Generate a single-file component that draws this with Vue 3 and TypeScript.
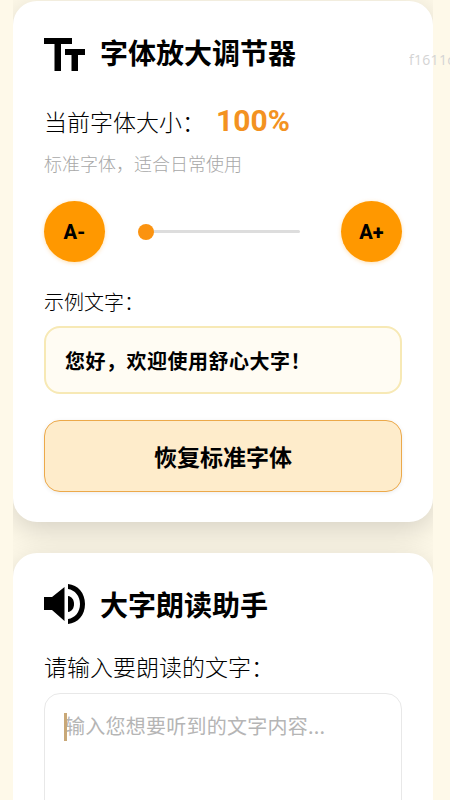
<script setup lang="ts">
const title = '字体放大调节器'
</script>

<template>
  <main class="page">
    <span class="stray">f1611c</span>
    <div class="scroller">
      <section class="card first">
        <header class="head">
          <svg class="icon" viewBox="0 0 41 33" aria-hidden="true">
            <path d="M0 0H28V6H17V33H10.500V6H0Z" />
            <path d="M21 11H41V17H34V33H27.500V17H21Z" />
          </svg>
          <h2>{{ title }}</h2>
        </header>
        <div class="current">
          <span class="label">当前字体大小：</span>
          <strong>100%</strong>
        </div>
        <p class="hint">标准字体，适合日常使用</p>
        <div class="controls">
          <button class="round">A-</button>
          <div class="slider"><span class="thumb"></span></div>
          <button class="round">A+</button>
        </div>
        <p class="sample-label">示例文字：</p>
        <div class="sample">您好，欢迎使用舒心大字！</div>
        <button class="reset">恢复标准字体</button>
      </section>

      <section class="card second">
        <header class="head">
          <svg class="icon speaker" viewBox="0 0 41 40" aria-hidden="true">
            <path d="M0 13H8L20.500 3V37L8 26H0Z" />
            <path d="M24 12C28 12.500 30 16 30 20C30 24 28 27.500 24 28Z" />
            <path d="M24 0C34 1 41 9 41 20C41 31 34 39 24 40V35C31 34 36 28 36 20C36 12 31 6 24 5Z" />
          </svg>
          <h2>大字朗读助手</h2>
        </header>
        <p class="label input-label">请输入要朗读的文字：</p>
        <div class="input-wrap">
          <textarea placeholder="输入您想要听到的文字内容..."></textarea>
          <span class="caret"></span>
        </div>
      </section>
    </div>
  </main>
</template>

<style>
html, body { margin: 0; background: #fef9e9; overflow: hidden; }
</style>

<style scoped>
.page {
  position: relative;
  box-sizing: border-box;
  height: 800px;
  overflow: hidden;
  padding-left: 13px;
  background: #fef9e9;
  color: #000;
  font-family: "Noto Sans CJK SC", sans-serif;
}
.scroller {
  width: 420px;
  height: 800px;
  overflow: hidden;
  padding-top: 1px;
  box-sizing: border-box;
  display: flex;
  flex-direction: column;
  gap: 31px;
}
.stray {
  position: absolute;
  z-index: 1;
  left: 409px;
  top: 51px;
  max-width: 41px;
  overflow: hidden;
  font: 14px/18px "Open Sans", sans-serif;
  letter-spacing: .3px;
  color: #d4d4d4;
  white-space: nowrap;
}
.card {
  box-sizing: border-box;
  flex: none;
  background: #fff;
  border-radius: 24px;
  padding: 31px 31px 30px;
  box-shadow: 0 8px 30px rgba(0, 0, 0, .17);
}
.first { height: 521px; }
.second { height: 400px; }
.head { display: flex; align-items: center; gap: 15px; height: 40px; }
.icon { width: 41px; height: 33px; fill: #000; flex: none; margin-top: 4px; }
.speaker { height: 40px; margin-top: 0; }
h2 { margin: 0; font-size: 28px; line-height: 40px; font-weight: 700; }
.label { font-size: 23px; line-height: 34px; font-weight: 300; color: #000; }
.current { display: flex; align-items: center; margin-top: 29px; height: 40px; }
.current strong {
  margin-left: 11px;
  font: 700 30px/40px Roboto, sans-serif;
  color: #f39221;
}
.hint { margin: 9px 0 0; font-size: 18px; line-height: 26px; font-weight: 300; color: #a8a8a8; }
.controls { display: flex; align-items: center; justify-content: space-between; margin-top: 25px; }
.round {
  width: 61px;
  height: 61px;
  flex: none;
  padding: 0;
  border: 0;
  border-radius: 50%;
  background: #ff9800;
  color: #000;
  font: 800 20px/1 Roboto, sans-serif;
  box-shadow: 0 1px 4px rgba(255, 152, 0, .3);
}
.slider {
  position: relative;
  width: 154px;
  height: 3px;
  border-radius: 2px;
  background: #ddd;
}
.thumb {
  position: absolute;
  left: -8px;
  top: -6.5px;
  width: 16px;
  height: 16px;
  border-radius: 50%;
  background: #fb9310;
}
.sample-label { margin: 23px 0 0; font-size: 20px; line-height: 34px; font-weight: 300; color: #000; }
.sample {
  box-sizing: border-box;
  height: 68px;
  margin-top: 7px;
  padding: 0 19px;
  display: flex;
  align-items: center;
  border: 2px solid #f7e9b5;
  border-radius: 16px;
  background: #fffcf3;
  font-size: 20px;
  font-weight: 700;
  letter-spacing: .5px;
}
.reset {
  display: block;
  box-sizing: border-box;
  width: 100%;
  height: 72px;
  margin-top: 26px;
  border: 1.5px solid #eca94a;
  border-radius: 16px;
  background: #feeccb;
  color: #000;
  font-family: inherit;
  font-size: 23px;
  font-weight: 700;
  box-shadow: 0 1px 4px rgba(0, 0, 0, .08);
}
.input-label { margin: 25px 0 0; }
.input-wrap { position: relative; margin-top: 10px; }
textarea {
  display: block;
  box-sizing: border-box;
  width: 100%;
  height: 200px;
  padding: 17px 20px;
  border: 1.5px solid #e8e8e8;
  border-radius: 16px;
  outline: 0;
  resize: none;
  font-family: inherit;
  font-size: 20px;
  line-height: 30px;
  letter-spacing: .25px;
}
textarea::placeholder { color: #b5b5b5; opacity: 1; }
.caret {
  position: absolute;
  left: 20px;
  top: 20px;
  width: 3px;
  height: 28px;
  background: #c9a877;
}
</style>
